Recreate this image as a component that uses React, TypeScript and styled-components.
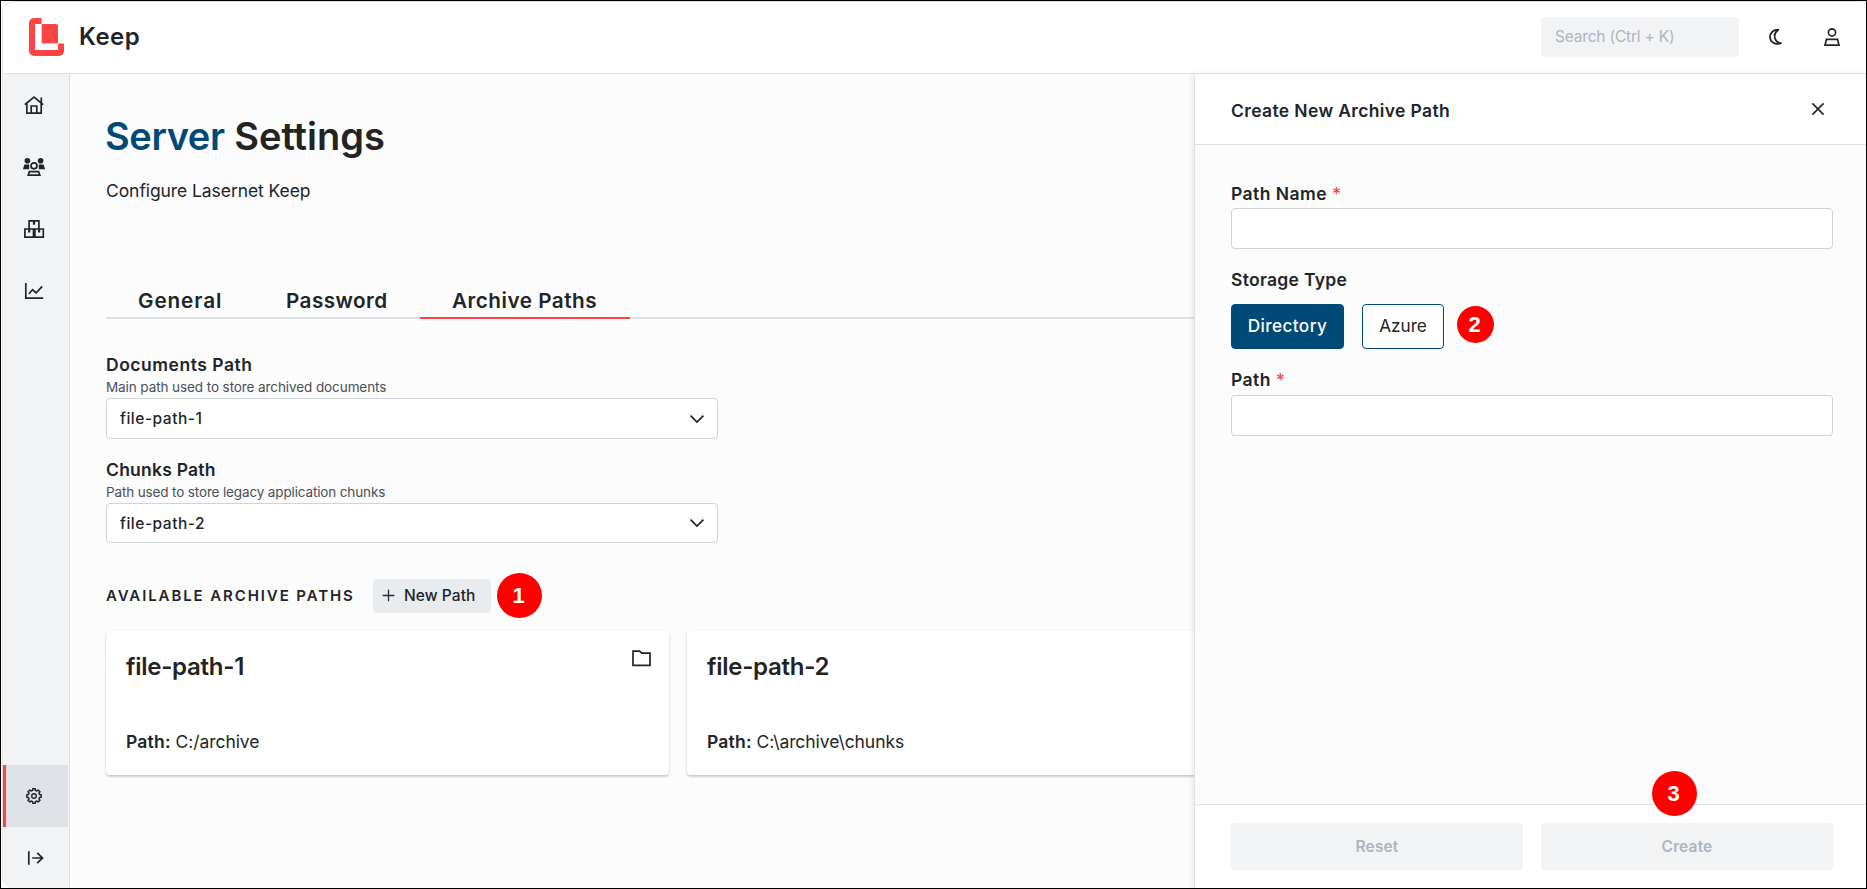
import React from 'react';
import styled, { createGlobalStyle, css } from 'styled-components';

const color = {
  ink: '#212529',
  blue: '#004a77',
  red: '#fc4444',
  line: '#dee2e6',
  muted: '#adb5bd',
};

const GlobalStyle = createGlobalStyle`
  *, *::before, *::after { box-sizing: border-box; }
  html, body { margin: 0; padding: 0; }
  body {
    font-family: Inter, "Liberation Sans", sans-serif;
    color: #212529;
    background: #fff;
  }
  h1, h2, h3, p { margin: 0; }
  button { font: inherit; color: inherit; margin: 0; padding: 0; border: 0; background: none; }
`;

/* ---------- shell ---------- */

const Frame = styled.div`
  width: 1867px;
  height: 889px;
  padding: 0 0 0 1px;
  border: 1px solid #000;
  background: #fff;
  overflow: hidden;
`;

const Shell = styled.div`
  height: 887px;
  display: flex;
  flex-direction: column;
  border-left: 1px solid #e9e3e4;
  border-top: 1px solid #e4e2e4;
  border-radius: 12px 6px 6px 12px;
  overflow: hidden;
`;

const Header = styled.header`
  flex: none;
  height: 72px;
  display: flex;
  align-items: center;
  padding: 0 25px 1px 26px;
  border-bottom: 1px solid ${color.line};
  background: #fff;
`;

const Brand = styled.div`
  display: flex;
  align-items: center;
  gap: 15px;
  flex: 1;
`;

const BrandName = styled.span`
  font-size: 24px;
  font-weight: 600;
  letter-spacing: 0.5px;
  line-height: 30px;
`;

const SearchBox = styled.div`
  width: 198px;
  height: 40px;
  padding-left: 14px;
  border-radius: 4px;
  background: #f1f3f5;
  color: ${color.muted};
  font-size: 15.5px;
  line-height: 40px;
  letter-spacing: -0.19px;
`;

const HeaderButton = styled.button<{ $gap: number }>`
  display: flex;
  margin-left: ${(p) => p.$gap}px;
`;

const Body = styled.div`
  flex: 1;
  min-height: 0;
  display: flex;
`;

/* ---------- sidebar ---------- */

const Sidebar = styled.nav`
  flex: none;
  width: 67px;
  display: flex;
  flex-direction: column;
  padding-right: 1px;
  margin-bottom: -1px;
  border-right: 1px solid ${color.line};
  background: #f1f3f5;
`;

const NavItem = styled.button<{ $active?: boolean }>`
  display: flex;
  align-items: center;
  justify-content: center;
  height: 62px;
  padding-right: 6px;
  border-left: 3px solid transparent;
  ${(p) =>
    p.$active &&
    css`
      border-left-color: ${color.red};
      background: #dee1e6;
    `}
`;

const NavSpacer = styled.div`
  flex: 1;
`;

/* ---------- main ---------- */

const Main = styled.main`
  flex: 1;
  min-width: 0;
  overflow: hidden;
  padding: 38px 0 0 36px;
  background: #fcfcfc;
`;

const Title = styled.h1`
  margin-left: -1px;
  font-size: 38px;
  font-weight: 600;
  line-height: 48px;
  color: #232323;
`;

const TitleAccent = styled.span`
  color: ${color.blue};
  letter-spacing: -0.4px;
`;

const Subtitle = styled.p`
  margin-top: 18px;
  font-size: 17.5px;
  line-height: 26px;
  letter-spacing: -0.08px;
`;

const Tabs = styled.div`
  display: flex;
  width: 1743px;
  margin-top: 81px;
  border-bottom: 2px solid ${color.line};
`;

const Tab = styled.button<{ $width: number; $track: number; $active?: boolean }>`
  width: ${(p) => p.$width}px;
  height: 34px;
  margin-bottom: -2px;
  padding: 0 0 0 32px;
  border-bottom: 2px solid ${(p) => (p.$active ? color.red : 'transparent')};
  font-size: 20.7px;
  font-weight: 600;
  line-height: 32px;
  letter-spacing: ${(p) => p.$track}px;
  text-align: left;
  white-space: nowrap;
`;

const Field = styled.div<{ $top: number }>`
  width: 612px;
  margin-top: ${(p) => p.$top}px;
`;

const Label = styled.div<{ $track: number }>`
  font-size: 17.5px;
  font-weight: 600;
  line-height: 24px;
  letter-spacing: ${(p) => p.$track}px;
`;

const Hint = styled.div<{ $track: number }>`
  font-size: 13.5px;
  line-height: 20px;
  letter-spacing: ${(p) => p.$track}px;
  color: #495057;
`;

const Select = styled.div<{ $height: number }>`
  display: flex;
  align-items: center;
  justify-content: space-between;
  height: ${(p) => p.$height}px;
  margin-top: 1px;
  padding: 0 12px 0 13px;
  border: 1px solid #ced4da;
  border-radius: 4px;
  background: #fff;
  font-size: 15.5px;
  font-weight: 500;
  letter-spacing: 0.52px;
`;

const SectionRow = styled.div`
  display: flex;
  align-items: center;
  height: 34px;
  margin-top: 36px;
`;

const SectionTitle = styled.h2`
  width: 267px;
  padding-bottom: 2px;
  font-size: 15px;
  font-weight: 600;
  letter-spacing: 1.9px;
  white-space: nowrap;
`;

const NewPathButton = styled.button`
  position: relative;
  display: flex;
  align-items: center;
  gap: 9px;
  width: 118px;
  height: 34px;
  padding: 0 0 1px 9px;
  border-radius: 4px;
  background: #e9ecef;
  font-size: 15.5px;
  font-weight: 500;
  line-height: 19px;
  letter-spacing: 0.08px;
  white-space: nowrap;
`;

const Badge = styled.span<{ $size: number; $left: number; $top: number }>`
  position: absolute;
  left: ${(p) => p.$left}px;
  top: ${(p) => p.$top}px;
  width: ${(p) => p.$size}px;
  height: ${(p) => p.$size}px;
  padding-right: 2px;
  border-radius: 50%;
  background: #f00;
  color: #fff;
  font: bold 22px "Liberation Sans", sans-serif;
  line-height: ${(p) => p.$size}px;
  letter-spacing: 0;
  text-align: center;
`;

const Cards = styled.div`
  display: grid;
  grid-template-columns: 563px 563px;
  gap: 18px;
  margin-top: 18px;
`;

const Card = styled.article`
  display: flex;
  flex-direction: column;
  justify-content: space-between;
  height: 144px;
  padding: 19px 18px 20px 20px;
  border-radius: 4px;
  background: #fff;
  box-shadow: 0 1px 3px rgba(0, 0, 0, 0.12), 0 2px 2px rgba(0, 0, 0, 0.12);
`;

const CardHead = styled.div`
  display: flex;
  justify-content: space-between;
  align-items: flex-start;
`;

const CardTitle = styled.h3`
  font-size: 24px;
  font-weight: 600;
  line-height: 34px;
  letter-spacing: -0.26px;
  color: #232323;
`;

const CardPath = styled.p`
  font-size: 17.5px;
  line-height: 26px;
  letter-spacing: -0.07px;
  strong {
    font-weight: 600;
    letter-spacing: 0.2px;
  }
`;

/* ---------- create panel ---------- */

const Panel = styled.aside`
  position: relative;
  flex: none;
  width: 672px;
  display: flex;
  flex-direction: column;
  border-left: 1px solid ${color.line};
  background: #fcfcfc;
  box-shadow: -2px 0 6px rgba(0, 0, 0, 0.08);
`;

const PanelHead = styled.div`
  display: flex;
  align-items: center;
  justify-content: space-between;
  height: 71px;
  padding: 0 41px 0 36px;
  border-bottom: 1px solid ${color.line};
  background: #fff;
`;

const PanelTitle = styled.h2`
  padding-top: 2px;
  font-size: 17.5px;
  font-weight: 600;
  letter-spacing: 0.36px;
`;

const PanelBody = styled.div`
  flex: 1;
  padding: 37px 33px 0 36px;
`;

const FormField = styled.div`
  margin-bottom: 19px;
`;

const Required = styled.span`
  color: ${color.red};
  font-weight: 500;
`;

const TextBox = styled.div<{ $top: number }>`
  height: 41px;
  margin-top: ${(p) => p.$top}px;
  border: 1px solid #ced4da;
  border-radius: 4px;
  background: #fff;
`;

const Choices = styled.div`
  position: relative;
  display: flex;
  gap: 18px;
  margin-top: 12px;
`;

const Choice = styled.button<{ $width: number; $selected?: boolean }>`
  width: ${(p) => p.$width}px;
  height: 45px;
  padding-bottom: 2px;
  border: 1px solid ${color.blue};
  border-radius: 4px;
  background: ${(p) => (p.$selected ? color.blue : '#fff')};
  color: ${(p) => (p.$selected ? '#fff' : color.ink)};
  font-size: 17.2px;
  font-weight: ${(p) => (p.$selected ? 500 : 400)};
  letter-spacing: ${(p) => (p.$selected ? 0.4 : 0)}px;
`;

const PanelFoot = styled.div`
  display: flex;
  gap: 18px;
  height: 84px;
  padding: 18px 33px 0 36px;
  border-top: 1px solid ${color.line};
  background: #fff;
`;

const FootButton = styled.button`
  position: relative;
  flex: 1;
  height: 47px;
  border-radius: 4px;
  background: #f1f3f5;
  color: ${color.muted};
  font-size: 15.5px;
  font-weight: 600;
  letter-spacing: 0.15px;
`;

/* ---------- icons ---------- */

const Stroke = styled.svg`
  display: block;
  flex: none;
  fill: none;
  stroke: ${color.ink};
  stroke-width: 1.7;
`;

const Logo = () => (
  <svg width="35" height="38" viewBox="0 0 35 38">
    <path
      fill={color.red}
      d="M12.5 0H5a5 5 0 0 0-5 5v28a5 5 0 0 0 5 5h25a5 5 0 0 0 5-5v-7.5h-6V32H6V6h6.5z"
    />
    <path fill={color.red} d="M12.8 6H27a2 2 0 0 1 2 2v17.3H12.8z" />
    <path d="M12.6 6v19.4H29" fill="none" stroke="#fda5a5" strokeWidth=".6" />
  </svg>
);

const HomeIcon = () => (
  <Stroke width="20" height="20" viewBox="0 0 20 20">
    <path d="M.8 9.6 10 2l9.2 7.6M2.8 8.2v10h14.4v-10M17.3 7.8V2.6M7.2 18v-7h5.6v7" />
  </Stroke>
);

const GroupIcon = () => (
  <Stroke width="24" height="20" viewBox="0 0 24 20">
    <g fill={color.ink} stroke="none">
      <circle cx="5.4" cy="3.8" r="2.8" />
      <circle cx="18.6" cy="3.8" r="2.8" />
      <path d="M2.4 7.6h4.8v4.6H.9zM21.6 7.6h-4.8v4.6h6.3z" />
    </g>
    <circle cx="12" cy="8.8" r="3" />
    <path d="M7.4 14.6h9.2l1.2 3.6H6.2z" />
  </Stroke>
);

const BoxesIcon = () => (
  <Stroke width="22" height="20" viewBox="0 0 22 20">
    <path d="M6.1 10V1.9h9.8V10M1.9 18.1V10h8.6v8.1zM11.9 18.1V10h8.4v8.1z" />
    <path d="M11 2v3.8M6.2 10v3.6M16.1 10v3.6" strokeWidth="2.2" />
  </Stroke>
);

const ChartIcon = () => (
  <Stroke width="20" height="20" viewBox="0 0 20 20">
    <path d="M1.8 2v15.2h17.4M5 12.8l3.6-4 3.6 3 6-6.4" />
  </Stroke>
);

const gearPath =
  Array.from({ length: 8 }, (_, i) => {
    const at = (r: number, deg: number) => {
      const a = ((i * 45 + deg) * Math.PI) / 180;
      return `${(10 + r * Math.cos(a)).toFixed(2)} ${(10 + r * Math.sin(a)).toFixed(2)}`;
    };
    return `${i ? 'L' : 'M'}${at(7.3, -10)}L${at(7.3, 10)}L${at(5.8, 14)}L${at(5.8, 31)}`;
  }).join('') + 'z';

const GearIcon = () => (
  <Stroke width="20" height="20" viewBox="0 0 20 20" strokeLinejoin="round">
    <path d={gearPath} strokeWidth="1.5" />
    <circle cx="10" cy="10" r="2.3" strokeWidth="1.4" />
  </Stroke>
);

const ExpandIcon = () => (
  <Stroke width="20" height="20" viewBox="0 0 20 20">
    <path d="M4.8 3.2v13.6M8.2 10h10.4M13.2 4.8l5.3 5.2-5.3 5.2" />
  </Stroke>
);

const MoonIcon = () => (
  <Stroke width="16" height="18" viewBox="0 0 16 18">
    <path
      strokeLinejoin="round"
      d="M10.4 1.7C5.4 1.6 2 4.8 2 9.1c0 4.6 5 8.5 11 6C7.6 14.8 3.2 7 10.4 1.7z"
    />
  </Stroke>
);

const UserIcon = () => (
  <Stroke width="18" height="20" viewBox="0 0 18 20">
    <circle cx="9" cy="5.4" r="3.6" />
    <path d="M3.4 12.4h11.2l1.4 5.8H2z" />
  </Stroke>
);

const CloseIcon = () => (
  <Stroke width="14" height="14" viewBox="0 0 14 14">
    <path d="M1.4 1.4l11.2 11.2M12.6 1.4 1.4 12.6" />
  </Stroke>
);

const ChevronIcon = () => (
  <Stroke width="16" height="10" viewBox="0 0 16 10">
    <path d="M1.6 1.6 8 8l6.4-6.4" />
  </Stroke>
);

const PlusIcon = () => (
  <Stroke width="13" height="13" viewBox="0 0 13 13">
    <path d="M6.5.7v11.6M.7 6.5h11.6" strokeWidth="1.3" />
  </Stroke>
);

const FolderIcon = () => (
  <Stroke width="19" height="17" viewBox="0 0 19 17">
    <path d="M1 15.4V1.1h6.6l2.2 2.1h8.2v12.2z" />
  </Stroke>
);

/* ---------- page ---------- */

const cards = [
  { name: 'file-path-1', path: 'C:/archive', folder: true },
  { name: 'file-path-2', path: 'C:\\archive\\chunks', folder: false },
];

export default function App() {
  return (
    <Frame>
      <GlobalStyle />
      <Shell>
        <Header>
          <Brand>
            <Logo />
            <BrandName>Keep</BrandName>
          </Brand>
          <SearchBox>Search (Ctrl + K)</SearchBox>
          <HeaderButton $gap={29}>
            <MoonIcon />
          </HeaderButton>
          <HeaderButton $gap={39}>
            <UserIcon />
          </HeaderButton>
        </Header>
        <Body>
          <Sidebar>
            <NavItem><HomeIcon /></NavItem>
            <NavItem><GroupIcon /></NavItem>
            <NavItem><BoxesIcon /></NavItem>
            <NavItem><ChartIcon /></NavItem>
            <NavSpacer />
            <NavItem $active><GearIcon /></NavItem>
            <NavItem><ExpandIcon /></NavItem>
          </Sidebar>
          <Main>
            <Title>
              <TitleAccent>Server</TitleAccent> Settings
            </Title>
            <Subtitle>Configure Lasernet Keep</Subtitle>
            <Tabs>
              <Tab $width={148} $track={0.9}>General</Tab>
              <Tab $width={166} $track={0.45}>Password</Tab>
              <Tab $width={210} $track={0.5} $active>Archive Paths</Tab>
            </Tabs>
            <Field $top={34}>
              <Label $track={0.52}>Documents Path</Label>
              <Hint $track={-0.09}>Main path used to store archived documents</Hint>
              <Select $height={41}>
                file-path-1
                <ChevronIcon />
              </Select>
            </Field>
            <Field $top={19}>
              <Label $track={0.24}>Chunks Path</Label>
              <Hint $track={-0.14}>Path used to store legacy application chunks</Hint>
              <Select $height={40}>
                file-path-2
                <ChevronIcon />
              </Select>
            </Field>
            <SectionRow>
              <SectionTitle>AVAILABLE ARCHIVE PATHS</SectionTitle>
              <NewPathButton>
                <PlusIcon />
                New Path
                <Badge $size={45} $left={124} $top={-6}>1</Badge>
              </NewPathButton>
            </SectionRow>
            <Cards>
              {cards.map((c) => (
                <Card key={c.name}>
                  <CardHead>
                    <CardTitle>{c.name}</CardTitle>
                    {c.folder && <FolderIcon />}
                  </CardHead>
                  <CardPath>
                    <strong>Path:</strong> {c.path}
                  </CardPath>
                </Card>
              ))}
            </Cards>
          </Main>
          <Panel>
            <PanelHead>
              <PanelTitle>Create New Archive Path</PanelTitle>
              <CloseIcon />
            </PanelHead>
            <PanelBody>
              <FormField>
                <Label $track={0.45}>
                  Path Name <Required>*</Required>
                </Label>
                <TextBox $top={2} />
              </FormField>
              <FormField>
                <Label $track={0.29}>Storage Type</Label>
                <Choices>
                  <Choice $width={113} $selected>Directory</Choice>
                  <Choice $width={82}>Azure</Choice>
                  <Badge $size={37} $left={226} $top={2}>2</Badge>
                </Choices>
              </FormField>
              <FormField>
                <Label $track={0.45}>
                  Path <Required>*</Required>
                </Label>
                <TextBox $top={3} />
              </FormField>
            </PanelBody>
            <PanelFoot>
              <FootButton>Reset</FootButton>
              <FootButton>
                Create
                <Badge $size={45} $left={111} $top={-52}>3</Badge>
              </FootButton>
            </PanelFoot>
          </Panel>
        </Body>
      </Shell>
    </Frame>
  );
}
